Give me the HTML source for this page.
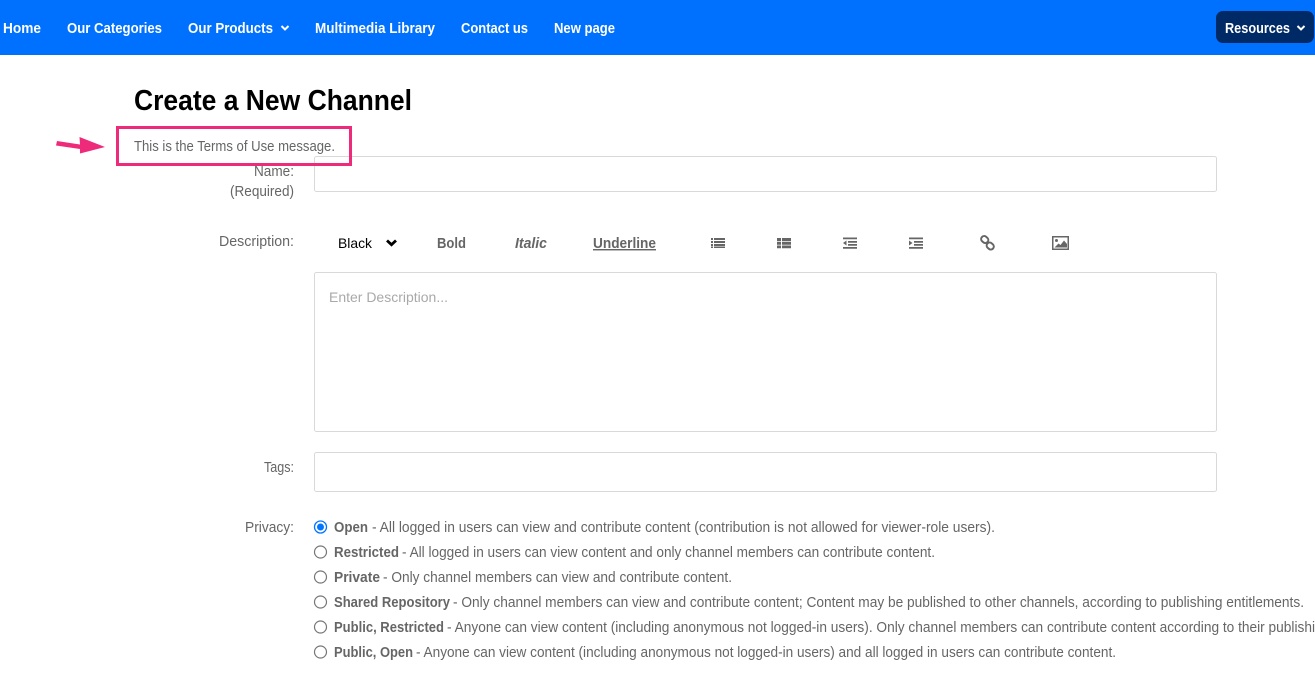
<!DOCTYPE html>
<html lang="en"><head><meta charset="utf-8"><title>Create a New Channel</title>
<style>
html,body{margin:0;padding:0;background:#fff;width:1315px;height:678px;overflow:hidden}
svg{display:block}
text{font-family:"Liberation Sans",sans-serif;font-size:14.500px;fill:#666}
.n{fill:#fff;font-weight:700;font-size:14.500px}
.b{font-weight:700}
.l{text-anchor:end}
</style></head><body>
<svg width="1315" height="678" viewBox="0 0 1315 678" xmlns="http://www.w3.org/2000/svg">
<rect width="1315" height="55" fill="#0070ff"/>
<text class="n" x="3" y="33" textLength="38" lengthAdjust="spacingAndGlyphs">Home</text>
<text class="n" x="67" y="33" textLength="95" lengthAdjust="spacingAndGlyphs">Our Categories</text>
<text class="n" x="188" y="33" textLength="85" lengthAdjust="spacingAndGlyphs">Our Products</text>
<path d="M281.500 26l3.500 3.500 3.500-3.500" fill="none" stroke="#fff" stroke-width="2"/>
<text class="n" x="315" y="33" textLength="120" lengthAdjust="spacingAndGlyphs">Multimedia Library</text>
<text class="n" x="461" y="33" textLength="67" lengthAdjust="spacingAndGlyphs">Contact us</text>
<text class="n" x="554" y="33" textLength="61" lengthAdjust="spacingAndGlyphs">New page</text>
<rect x="1216" y="11" width="98" height="32" rx="7" fill="#002a66"/>
<text class="n" x="1225" y="33" textLength="65" lengthAdjust="spacingAndGlyphs">Resources</text>
<path d="M1297.500 26l3.500 3.500 3.500-3.500" fill="none" stroke="#fff" stroke-width="2"/>

<text x="134" y="110" textLength="278" lengthAdjust="spacingAndGlyphs" style="font-size:29px;font-weight:700;fill:#000">Create a New Channel</text>

<rect x="314.500" y="156.500" width="902" height="35" rx="2" fill="#fff" stroke="#d9d9d9"/>
<rect x="117.500" y="127.500" width="233" height="37" fill="none" stroke="#ee2a7b" stroke-width="3"/>
<path d="M57 141L80 144.500L79.500 137L105 147L80 153.500L80 149L56 145.500Z" fill="#ee2a7b"/>
<text x="134" y="151" textLength="201" lengthAdjust="spacingAndGlyphs">This is the Terms of Use message.</text>

<text x="254" y="176" textLength="40" lengthAdjust="spacingAndGlyphs">Name:</text>
<text x="230" y="196" textLength="64" lengthAdjust="spacingAndGlyphs">(Required)</text>
<text x="219" y="246" textLength="75" lengthAdjust="spacingAndGlyphs">Description:</text>
<text x="264" y="472" textLength="30" lengthAdjust="spacingAndGlyphs">Tags:</text>
<text x="245" y="532" textLength="49" lengthAdjust="spacingAndGlyphs">Privacy:</text>

<text x="338" y="248" textLength="34" lengthAdjust="spacingAndGlyphs" style="fill:#000;font-size:14px">Black</text>
<path d="M387 240.500l4.500 4.200 4.500-4.200" fill="none" stroke="#000" stroke-width="2.800"/>
<text class="b" x="437" y="248" textLength="29" lengthAdjust="spacingAndGlyphs">Bold</text>
<text class="b" x="515" y="248" textLength="32" lengthAdjust="spacingAndGlyphs" style="font-style:italic">Italic</text>
<text class="b" x="593" y="248" textLength="63" lengthAdjust="spacingAndGlyphs" text-decoration="underline">Underline</text>

<g fill="#666">
<path d="M711 238h2v2h-2zM714 238h11v2h-11zM711 241h2v2h-2zM714 241h11v2h-11zM711 244h2v2h-2zM714 244h11v2h-11zM711 246.500h2v1.500h-2zM714 246.500h11v1.500h-11z"/>
<path d="M777 238h4v3h-4zM782 238h9v3h-9zM777 241.800h4v3h-4zM782 241.800h9v3h-9zM777 245.500h4v2.800h-4zM782 245.500h9v2.800h-9z"/>
<path d="M843 237.500h14v1.800h-14zM848 241h9v1.800h-9zM848 244h9v1.800h-9zM843 247h14v1.800h-14zM846.500 240.500v5l-3.500-2.500z"/>
<path d="M909 237.500h14v1.800h-14zM914 241h9v1.800h-9zM914 244h9v1.800h-9zM909 247h14v1.800h-14zM909 240.500v5l3.500-2.500z"/>
<path fill-rule="evenodd" d="M1060 236.500h1v0zM1052 236h17v14h-17zM1053.500 237.500v11h14v-11z"/>
<path d="M1054.500 247.500l4-4 2 1.500 3.500-4.500 3 3.500v3.500z"/>
<circle cx="1056.500" cy="240.500" r="1.500"/>
</g>
<g fill="none" stroke="#666" stroke-width="2">
<rect x="981" y="236.500" width="7.500" height="6" rx="3" transform="rotate(40 984.700 239.500)"/>
<rect x="986.500" y="243" width="7.500" height="6" rx="3" transform="rotate(40 990.200 246)"/>
</g>

<rect x="314.500" y="272.500" width="902" height="159" rx="2" fill="#fff" stroke="#d9d9d9"/>
<text x="329" y="302" textLength="119" lengthAdjust="spacingAndGlyphs" style="fill:#a9a9a9;font-size:14px">Enter Description...</text>
<rect x="314.500" y="452.500" width="902" height="39" rx="2" fill="#fff" stroke="#d9d9d9"/>

<circle cx="320.500" cy="527" r="6" fill="#fff" stroke="#0075ff" stroke-width="1.300"/>
<circle cx="320.500" cy="527" r="3.500" fill="#0075ff"/>
<g fill="#fff" stroke="#767676" stroke-width="1.200">
<circle cx="320.500" cy="552" r="6"/><circle cx="320.500" cy="577" r="6"/><circle cx="320.500" cy="602" r="6"/><circle cx="320.500" cy="627" r="6"/><circle cx="320.500" cy="652" r="6"/>
</g>

<text class="b" x="334" y="532" textLength="34" lengthAdjust="spacingAndGlyphs">Open</text>
<text x="372" y="532" textLength="623" lengthAdjust="spacingAndGlyphs">- All logged in users can view and contribute content (contribution is not allowed for viewer-role users).</text>
<text class="b" x="334" y="557" textLength="65" lengthAdjust="spacingAndGlyphs">Restricted</text>
<text x="402" y="557" textLength="533" lengthAdjust="spacingAndGlyphs">- All logged in users can view content and only channel members can contribute content.</text>
<text class="b" x="334" y="582" textLength="46" lengthAdjust="spacingAndGlyphs">Private</text>
<text x="383" y="582" textLength="349" lengthAdjust="spacingAndGlyphs">- Only channel members can view and contribute content.</text>
<text class="b" x="334" y="607" textLength="116" lengthAdjust="spacingAndGlyphs">Shared Repository</text>
<text x="453" y="607" textLength="851" lengthAdjust="spacingAndGlyphs">- Only channel members can view and contribute content; Content may be published to other channels, according to publishing entitlements.</text>
<text class="b" x="334" y="632" textLength="110" lengthAdjust="spacingAndGlyphs">Public, Restricted</text>
<text x="447" y="632" textLength="868" lengthAdjust="spacingAndGlyphs">- Anyone can view content (including anonymous not logged-in users). Only channel members can contribute content according to their publishi</text>
<text class="b" x="334" y="657" textLength="79" lengthAdjust="spacingAndGlyphs">Public, Open</text>
<text x="416" y="657" textLength="700" lengthAdjust="spacingAndGlyphs">- Anyone can view content (including anonymous not logged-in users) and all logged in users can contribute content.</text>
</svg>
</body></html>
